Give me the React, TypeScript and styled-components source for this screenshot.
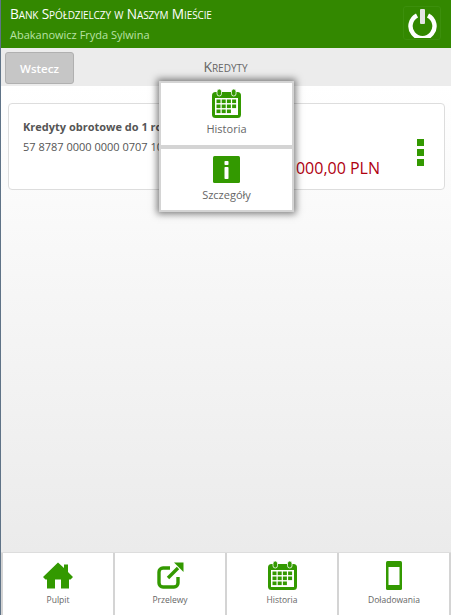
import React from 'react';
import styled, { createGlobalStyle } from 'styled-components';

const GREEN = '#339900';

const GlobalStyle = createGlobalStyle`
  html, body {
    margin: 0;
    padding: 0;
    height: 100%;
    overflow: hidden;
    font-family: 'Open Sans', 'Liberation Sans', sans-serif;
  }
  * { box-sizing: border-box; }
`;

const Page = styled.div`
  position: relative;
  width: 451px;
  height: 615px;
  display: flex;
  flex-direction: column;
  border-left: 1px solid #5f7387;
  background: #f3f3f3;
`;

const Header = styled.header`
  height: 48px;
  flex: none;
  background: #338800;
  display: flex;
  justify-content: space-between;
  padding: 5px 10px 0 9px;
`;

const BankInfo = styled.div`
  display: flex;
  flex-direction: column;
  gap: 5px;
`;

const BankName = styled.div`
  font-size: 13.7px;
  letter-spacing: -0.13px;
  line-height: 18px;
  font-variant: small-caps;
  color: #ffffff;
`;

const UserName = styled.div`
  font-size: 11px;
  line-height: 14px;
  color: #b9e2a5;
`;

const PowerButton = styled.button`
  width: 38px;
  height: 34px;
  margin-top: 1px;
  padding: 0;
  border: 1px solid #3c8f0c;
  border-radius: 3px;
  background: #338800;
  display: flex;
  align-items: center;
  justify-content: center;
`;

const Toolbar = styled.div`
  height: 38px;
  flex: none;
  background: #ececec;
  display: flex;
  align-items: flex-start;
  padding: 4px 74px 0 4px;
`;

const BackButton = styled.button`
  width: 69px;
  height: 32px;
  border: 1px solid #b0b0b0;
  border-radius: 3px;
  background: #c6c6c6;
  color: #ffffff;
  font-family: inherit;
  font-size: 11.5px;
  font-weight: 600;
  padding: 0;
`;

const PageTitle = styled.div`
  flex: 1;
  padding-top: 7px;
  text-align: center;
  font-size: 14px;
  line-height: 16px;
  font-variant: small-caps;
  color: #666666;
`;

const Content = styled.main`
  flex: 1;
  background: linear-gradient(to bottom, #ffffff 0%, #ebebeb 100%);
  padding: 17px 6px 0 7px;
`;

const AccountCard = styled.div`
  height: 87px;
  border: 1px solid #dddddd;
  border-radius: 4px;
  background: #ffffff;
  display: flex;
  justify-content: space-between;
  padding: 15px 20px 0 14px;
`;

const AccountInfo = styled.div`
  display: flex;
  flex-direction: column;
  gap: 5px;
`;

const AccountName = styled.div`
  font-size: 11px;
  line-height: 15px;
  font-weight: 700;
  color: #555555;
  white-space: nowrap;
`;

const AccountNumber = styled.div`
  font-size: 11px;
  line-height: 15px;
  color: #555555;
  white-space: nowrap;
`;

const Amount = styled.div`
  align-self: flex-end;
  margin: 0 37px 11px auto;
  font-size: 16px;
  line-height: 20px;
  color: #b00010;
  white-space: nowrap;
`;

const MoreDots = styled.div`
  display: flex;
  flex-direction: column;
  gap: 3px;
  padding-top: 20px;
`;

const Dot = styled.span`
  width: 7px;
  height: 7px;
  background: ${GREEN};
`;

const Footer = styled.nav`
  height: 63px;
  flex: none;
  border-top: 1px solid #dddddd;
  display: grid;
  grid-template-columns: repeat(4, 1fr);
  gap: 2px;
  padding: 0 2px;
  background: #d4d4d4;
`;

const FooterItem = styled.a`
  background: #ffffff;
  display: flex;
  flex-direction: column;
  align-items: center;
  padding-top: 7px;
  font-size: 8.5px;
  line-height: 12px;
  color: #666666;
  gap: 4px;
`;

const FooterIcon = styled.div`
  height: 30px;
  display: flex;
  align-items: center;
  justify-content: center;
`;

const Popup = styled.div`
  position: absolute;
  left: 158px;
  top: 81px;
  width: 135px;
  height: 131px;
  display: flex;
  flex-direction: column;
  gap: 4px;
  padding: 2px;
  background: #d4d4d4;
  box-shadow: 0 0 7px 2px rgba(0, 0, 0, 0.5);
`;

const PopupItem = styled.div`
  flex: 1;
  background: #ffffff;
  display: flex;
  flex-direction: column;
  align-items: center;
  padding-top: 6px;
  font-size: 11px;
  line-height: 15px;
  color: #666666;
  gap: 3px;
`;

const PopupIcon = styled.div`
  height: 29px;
  display: flex;
  align-items: center;
  justify-content: center;
`;

const CalendarIcon = () => (
  <svg width="29" height="29" viewBox="0 0 29 29">
    <rect x="0" y="3" width="29" height="26" rx="3.5" fill={GREEN} />
    <rect x="5" y="0" width="4.5" height="7" rx="2.2" fill={GREEN} stroke="#fff" strokeWidth="0.8" />
    <rect x="19.5" y="0" width="4.5" height="7" rx="2.2" fill={GREEN} stroke="#fff" strokeWidth="0.8" />
    <rect x="3" y="9" width="23" height="17" fill="#fff" />
    {[0, 1, 2].map(r =>
      [0, 1, 2, 3].map(c =>
        r === 2 && c === 3 ? null : (
          <rect key={`${r}-${c}`} x={4.5 + c * 5.2} y={10.5 + r * 5} width="4" height="3.6" fill={GREEN} />
        )
      )
    )}
  </svg>
);

const InfoIcon = () => (
  <svg width="27" height="27" viewBox="0 0 27 27">
    <rect width="27" height="27" rx="1.5" fill={GREEN} />
    <rect x="11.5" y="5" width="4" height="4" rx="0.8" fill="#fff" />
    <rect x="11.5" y="11" width="4" height="12" rx="0.8" fill="#fff" />
  </svg>
);

const HomeIcon = () => (
  <svg width="30" height="27" viewBox="0 0 30 26">
    <path d="M15 0 L21 5.5 V2 H25 V9.5 L30 14.5 L27.5 17 H26 V26 H18 V17 H12 V26 H4 V17 H2.5 L0 14.5 Z" fill={GREEN} />
  </svg>
);

const ShareIcon = () => (
  <svg width="27" height="27" viewBox="0 0 27 27" fill="none">
    <path d="M13 6 H6 A4 4 0 0 0 2 10 V21 A4 4 0 0 0 6 25 H17 A4 4 0 0 0 21 21 V15" stroke={GREEN} strokeWidth="3.4" />
    <path d="M11 16 L21 6" stroke={GREEN} strokeWidth="3.4" />
    <path d="M17 0.5 H26.5 V10 Z" fill={GREEN} />
  </svg>
);

const PhoneIcon = () => (
  <svg width="16" height="29" viewBox="0 0 16 29">
    <rect width="16" height="29" rx="1.5" fill={GREEN} />
    <rect x="2.5" y="6" width="11" height="18" fill="#fff" />
  </svg>
);

const PowerIcon = () => (
  <svg width="29" height="29" viewBox="0 0 29 29" fill="none">
    <path d="M9 6.5 A12 12 0 1 0 20 6.5" stroke="#fff" strokeWidth="4.4" />
    <rect x="12" y="0" width="5" height="15" rx="1" fill="#e4e4e4" />
  </svg>
);

export default function App() {
  return (
    <>
      <GlobalStyle />
      <Page>
        <Header>
          <BankInfo>
            <BankName>Bank Spółdzielczy w Naszym Mieście</BankName>
            <UserName>Abakanowicz Fryda Sylwina</UserName>
          </BankInfo>
          <PowerButton>
            <PowerIcon />
          </PowerButton>
        </Header>
        <Toolbar>
          <BackButton>Wstecz</BackButton>
          <PageTitle>Kredyty</PageTitle>
        </Toolbar>
        <Content>
          <AccountCard>
            <AccountInfo>
              <AccountName>Kredyty obrotowe do 1 roku</AccountName>
              <AccountNumber>57 8787 0000 0000 0707 1000 0000</AccountNumber>
            </AccountInfo>
            <Amount>-10 000,00 PLN</Amount>
            <MoreDots>
              <Dot />
              <Dot />
              <Dot />
            </MoreDots>
          </AccountCard>
        </Content>
        <Footer>
          <FooterItem>
            <FooterIcon><HomeIcon /></FooterIcon>
            Pulpit
          </FooterItem>
          <FooterItem>
            <FooterIcon><ShareIcon /></FooterIcon>
            Przelewy
          </FooterItem>
          <FooterItem>
            <FooterIcon><CalendarIcon /></FooterIcon>
            Historia
          </FooterItem>
          <FooterItem>
            <FooterIcon><PhoneIcon /></FooterIcon>
            Doładowania
          </FooterItem>
        </Footer>
        <Popup>
          <PopupItem>
            <PopupIcon><CalendarIcon /></PopupIcon>
            Historia
          </PopupItem>
          <PopupItem>
            <PopupIcon><InfoIcon /></PopupIcon>
            Szczegóły
          </PopupItem>
        </Popup>
      </Page>
    </>
  );
}
